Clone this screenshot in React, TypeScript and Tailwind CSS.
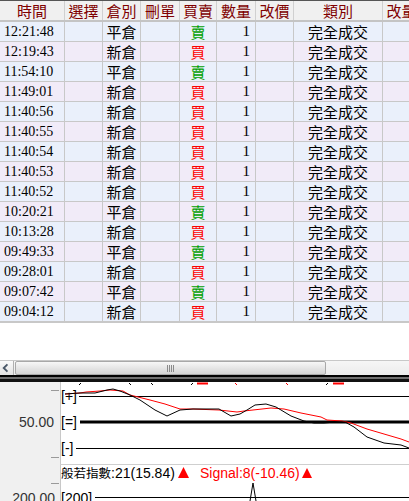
import React from "react";

const rows: [string, string, string][] = [
  ["12:21:48", "平倉", "賣"],
  ["12:19:43", "新倉", "買"],
  ["11:54:10", "平倉", "賣"],
  ["11:49:01", "新倉", "買"],
  ["11:40:56", "新倉", "買"],
  ["11:40:55", "新倉", "買"],
  ["11:40:54", "新倉", "買"],
  ["11:40:53", "新倉", "買"],
  ["11:40:52", "新倉", "買"],
  ["10:20:21", "平倉", "賣"],
  ["10:13:28", "新倉", "買"],
  ["09:49:33", "平倉", "賣"],
  ["09:28:01", "新倉", "買"],
  ["09:07:42", "平倉", "賣"],
  ["09:04:12", "新倉", "買"],
];

const WC = [
  "w-[65px]",
  "w-[38px]",
  "w-[38px]",
  "w-[39px]",
  "w-[37px]",
  "w-[39px]",
  "w-[38px]",
  "w-[89px]",
  "w-[38px]",
];

const headers = ["時間", "選擇", "倉別", "刪單", "買賣", "數量", "改價", "類別", "改量"];

const black =
  "65,394 80,393 95,393 107,390 113,389 120,391 130,395 140,400 155,410 167,416 180,410 193,409 219,409 231,416 240,414 247,410 255,405 266,404 276,407 291,416 304,421 314,423 324,423 335,422 345,422 354,427 367,437 384,443 401,445 409,448";
const red =
  "65,394 80,393 86,392 100,391 110,390 123,391 130,395 150,400 165,404 180,409 193,409 219,410 237,412 244,411 271,408 284,409 301,413 321,417 327,420 342,421 351,423 367,429 384,434 401,439 409,442";

function Chart() {
  const ff = "'Liberation Sans', 'Noto Sans CJK TC', sans-serif";
  return (
    <svg width={409} height={119} viewBox="0 382 409 119" className="block">
      <rect x={0} y={382} width={60} height={119} fill="#f0f0f0" />
      <rect x={60} y={382} width={349} height={119} fill="#ffffff" />
      <line x1={60.5} y1={382} x2={60.5} y2={501} stroke="#c8c8c8" />
      {[390, 457, 483].map((y) => (
        <line key={y} x1={51} y1={y + 0.5} x2={59} y2={y + 0.5} stroke="#9a9a9a" />
      ))}
      {/* top remnants */}
      <g stroke="#000" strokeWidth={1}>
        <line x1={79} y1={385} x2={81} y2={383} />
        <line x1={129} y1={383} x2={131} y2={385} />
        <line x1={151} y1={383} x2={153} y2={385} />
        <line x1={191} y1={385} x2={193} y2={383} />
        <line x1={326} y1={385} x2={328} y2={383} />
      </g>
      <g stroke="#ff0000" strokeWidth={1}>
        <line x1={197} y1={383.5} x2={208} y2={383.5} strokeWidth={2} />
        <line x1={235} y1={383} x2={237} y2={385} />
        <line x1={286} y1={383} x2={288} y2={385} />
        <line x1={333} y1={383.5} x2={344} y2={383.5} strokeWidth={2} />
      </g>
      {/* reference lines */}
      <line x1={79} y1={396.5} x2={409} y2={396.5} stroke="#000" />
      <line x1={80} y1={422} x2={409} y2={422} stroke="#000" strokeWidth={3} />
      <line x1={76} y1={448.5} x2={409} y2={448.5} stroke="#000" />
      <text x={61} y={401} fontSize={14} fontFamily={ff} fill="#000">[+]</text>
      <text x={61} y={427} fontSize={14} fontFamily={ff} fill="#000">[=]</text>
      <text x={61} y={453} fontSize={14} fontFamily={ff} fill="#000">[-]</text>
      <text x={54} y={427} fontSize={14} fontFamily={ff} fill="#333" textAnchor="end">50.00</text>
      <polyline points={red} fill="none" stroke="#ff0000" strokeWidth={1} />
      <polyline points={black} fill="none" stroke="#000" strokeWidth={1} />
      <line x1={60} y1={464.5} x2={409} y2={464.5} stroke="#cfcfcf" />
      <text x={61} y={478} fontSize={14} fontFamily={ff} fill="#000">
        <tspan fontSize={12.5}>般若指數</tspan>:21(15.84)
      </text>
      <polygon points="178,478 183.5,467 189,478" fill="#ff0000" />
      <text x={200} y={478} fontSize={14} fontFamily={ff} fill="#ff0000">Signal:8(-10.46)</text>
      <polygon points="302,478 307,468 312,478" fill="#ff0000" />
      <text x={55} y={503} fontSize={14} fontFamily={ff} fill="#333" textAnchor="end">200.00</text>
      <text x={61} y={503} fontSize={14} fontFamily={ff} fill="#000">[200]</text>
      <line x1={95} y1={497.5} x2={409} y2={497.5} stroke="#000" />
      <polyline points="250,501 253,483 256,501" fill="none" stroke="#000" />
    </svg>
  );
}

export default function App() {
  return (
    <div className="w-[409px] h-[501px] overflow-hidden bg-white font-['Liberation_Serif','Noto_Sans_CJK_TC',serif]">
      {/* table */}
      <div className="flex flex-col w-[409px] overflow-hidden">
        <div className="flex h-[22px] shrink-0 border-t border-t-[#555555] border-b-2 border-b-[#c4c4c4] bg-[#f0f0f0]">
          {headers.map((h, i) => (
            <div
              key={i}
              className={`${WC[i]} shrink-0 border-r border-r-[#d0d0d0] flex items-center justify-center text-[15px] leading-[19px] text-[#800000] font-['Noto_Sans_CJK_TC',sans-serif]`}
            >
              {h}
            </div>
          ))}
        </div>
        {rows.map((r, idx) => (
          <div
            key={idx}
            className={`flex h-[20px] shrink-0 border-b border-b-[#c8c8c8] ${
              idx % 2 === 0 ? "bg-[#eaf0fb]" : "bg-[#f1ebf8]"
            }`}
          >
            <div className={`${WC[0]} shrink-0 border-r border-r-[#c8c8c8] flex items-center pl-[4px] text-[14px] leading-[19px] text-black`}>
              {r[0]}
            </div>
            <div className={`${WC[1]} shrink-0 border-r border-r-[#c8c8c8]`} />
            <div className={`${WC[2]} shrink-0 border-r border-r-[#c8c8c8] flex items-center justify-center text-[15px] leading-[19px] text-black font-['Noto_Sans_CJK_TC',sans-serif]`}>
              {r[1]}
            </div>
            <div className={`${WC[3]} shrink-0 border-r border-r-[#c8c8c8]`} />
            <div
              className={`${WC[4]} shrink-0 border-r border-r-[#c8c8c8] flex items-center justify-center text-[15px] leading-[19px] font-['Noto_Sans_CJK_TC',sans-serif] ${
                r[2] === "賣" ? "text-[#00a000]" : "text-[#ff0000]"
              }`}
            >
              {r[2]}
            </div>
            <div className={`${WC[5]} shrink-0 border-r border-r-[#c8c8c8] flex items-center justify-end pr-[5px] text-[15px] leading-[19px] text-black`}>
              1
            </div>
            <div className={`${WC[6]} shrink-0 border-r border-r-[#c8c8c8]`} />
            <div className={`${WC[7]} shrink-0 border-r border-r-[#c8c8c8] flex items-center justify-center text-[15px] leading-[19px] text-black font-['Noto_Sans_CJK_TC',sans-serif]`}>
              完全成交
            </div>
            <div className={`${WC[8]} shrink-0 border-r border-r-[#c8c8c8]`} />
          </div>
        ))}
        <div className="h-px bg-[#c8c8c8]" />
      </div>
      {/* empty space */}
      <div className="h-[37px]" />
      {/* scrollbar */}
      <div className="flex h-[15px] border-t border-t-[#c8c8c8] bg-linear-to-b from-[#f6f6f6] to-[#ececec]">
        <div className="w-[14px] shrink-0 border-r border-r-[#b0b0b0] flex items-center justify-center bg-linear-to-b from-[#fafafa] to-[#e2e2e2]">
          <svg width={14} height={14} viewBox="0 0 14 14">
            <path d="M8 3 L4 7 L8 11" fill="none" stroke="#4a5868" strokeWidth={2} />
          </svg>
        </div>
        <div className="ml-px w-[311px] shrink-0 border border-[#a8a8a8] rounded-[2px] bg-linear-to-b from-[#f7f7f7] to-[#d4d4d4] flex items-center justify-center">
          <div className="flex gap-px">
            <div className="w-px h-[7px] bg-[#8a8a8a]" />
            <div className="w-px h-[7px] bg-[#8a8a8a]" />
            <div className="w-px h-[7px] bg-[#8a8a8a]" />
            <div className="w-px h-[7px] bg-[#8a8a8a]" />
          </div>
        </div>
        <div className="flex-1" />
      </div>
      {/* splitter bars */}
      <div className="h-[2px] bg-black" />
      <div className="h-[2px] bg-[#707070]" />
      <div className="h-[3px] bg-[#111111]" />
      <Chart />
    </div>
  );
}
